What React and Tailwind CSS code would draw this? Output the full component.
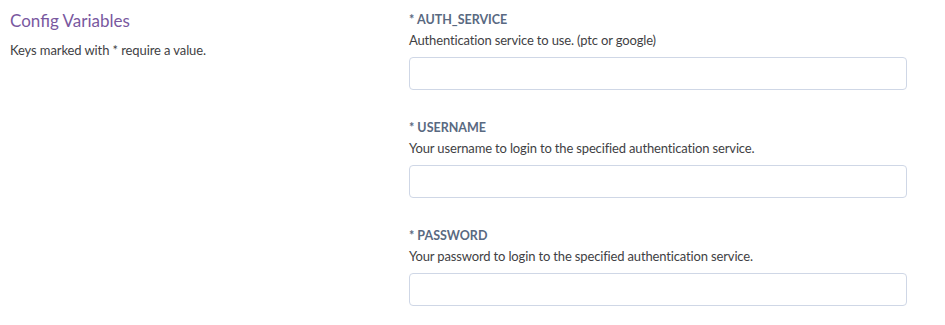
const fields = [
  { key: "AUTH_SERVICE", desc: "Authentication service to use. (ptc or google)" },
  { key: "USERNAME", desc: "Your username to login to the specified authentication service." },
  { key: "PASSWORD", desc: "Your password to login to the specified authentication service." },
];

const App = () => {
  return (
    <div className="min-h-screen bg-white font-['Lato',sans-serif] flex">
      {/* Left column */}
      <div className="w-[409px] pl-[10px] pt-[11px] shrink-0">
        <h2 className="text-[17px] leading-[20px] text-[#79589f]">Config Variables</h2>
        <p className="mt-[11px] text-[13px] leading-[16px] tracking-[-0.1px] text-[#3f3f44]">
          Keys marked with * require a value.
        </p>
      </div>

      {/* Fields */}
      <div className="w-[498px] flex flex-col gap-[30px] pt-[12px]">
        {fields.map((f) => (
          <div key={f.key}>
            <label className="block text-[12.5px] leading-[16px] font-bold text-[#596981]">
              * {f.key}
            </label>
            <p className="mt-[4px] text-[13px] leading-[17px] tracking-[-0.15px] text-[#3f3f44]">
              {f.desc}
            </p>
            <input
              type="text"
              className="mt-[8px] block w-full h-[33px] rounded-[4px] border border-[#cfd7e6] bg-white px-2 outline-none"
            />
          </div>
        ))}
      </div>
    </div>
  );
};

export default App;
